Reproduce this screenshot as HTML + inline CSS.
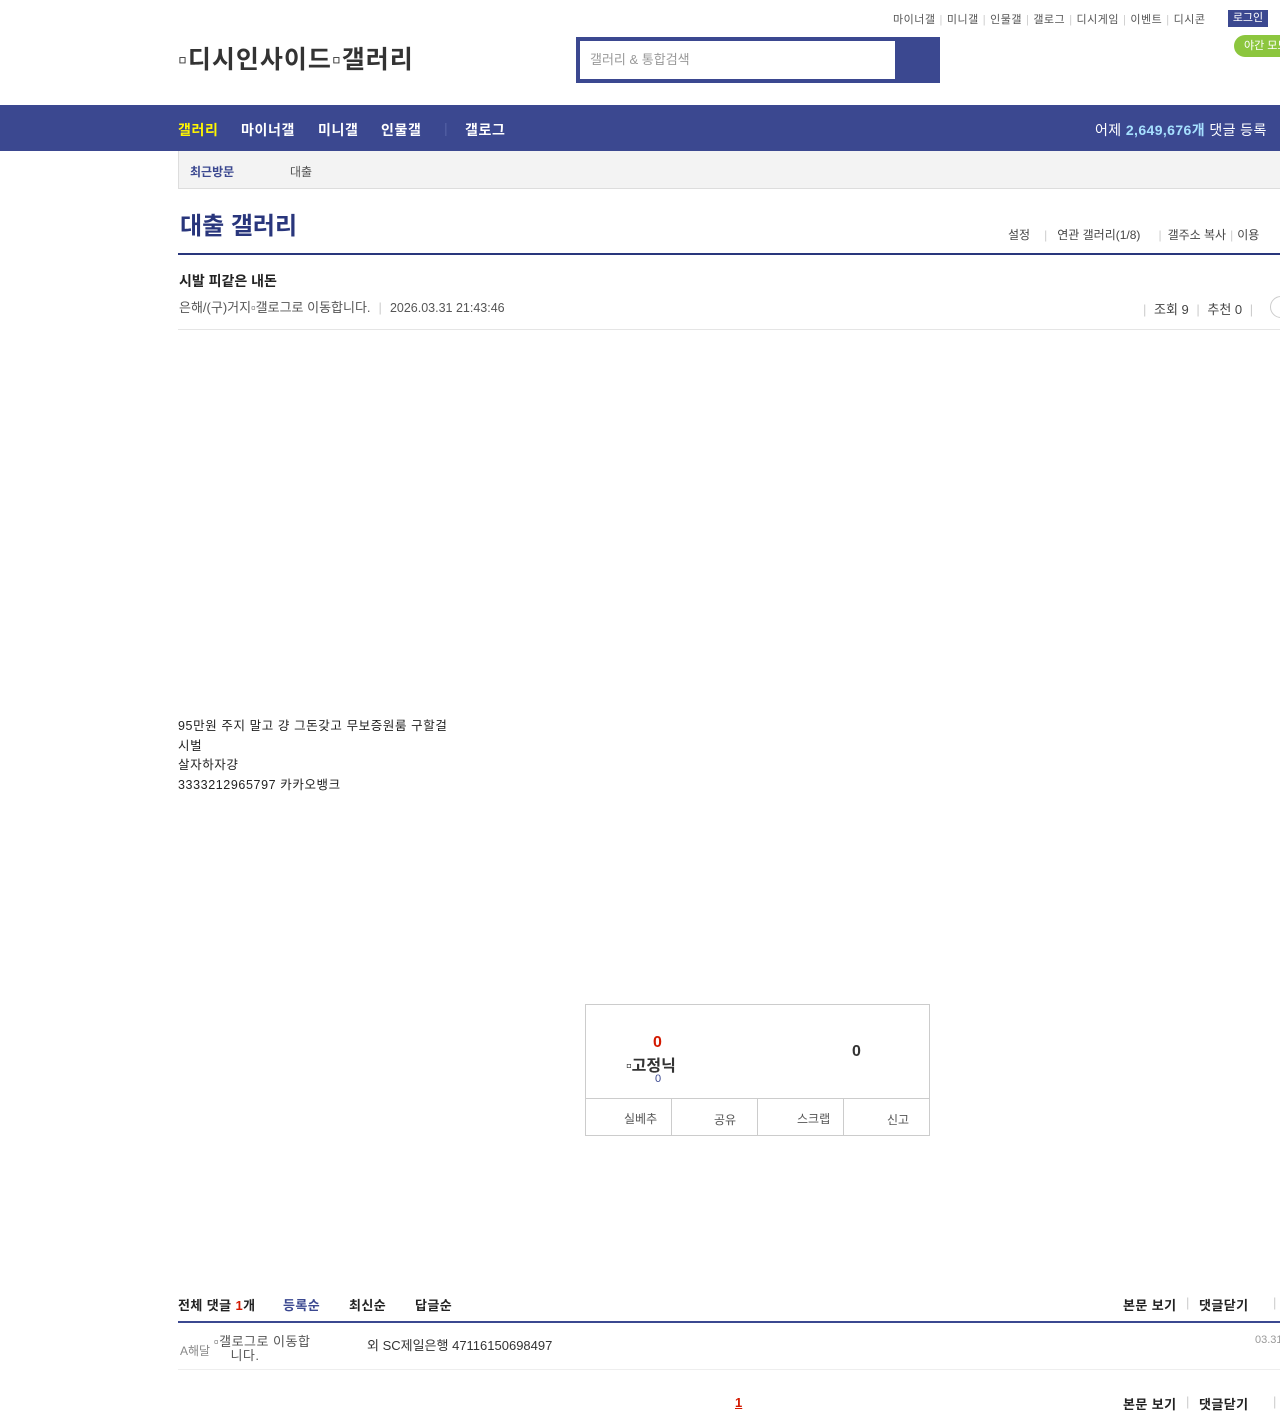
<!DOCTYPE html>
<html><head><meta charset="utf-8"><style>
*{margin:0;padding:0;box-sizing:border-box}
body{width:1280px;height:1428px;overflow:hidden;background:#fff;font-family:"Liberation Sans","Noto Sans CJK KR",sans-serif;color:#333;position:relative}
.a{position:absolute;white-space:nowrap}
.s{color:#ccc;margin:0 4px}
.n{position:absolute;top:120px;font-size:14px;font-weight:bold;color:#fff;letter-spacing:0.6px}
.c{position:absolute;top:1295px;font-size:13px;font-weight:bold;color:#222;letter-spacing:0.4px}
</style></head><body>
<div class="a" style="top:11px;left:893px;font-size:11px;color:#555;letter-spacing:0.5px">마이너갤<span class="s">|</span>미니갤<span class="s">|</span>인물갤<span class="s">|</span>갤로그<span class="s">|</span>디시게임<span class="s">|</span>이벤트<span class="s">|</span>디시콘</div>
<div class="a" style="top:10px;left:1228px;width:40px;height:17px;background:#3b4890;color:#fff;font-size:11px;text-align:center;line-height:17px">로그인</div>
<div class="a" style="top:35px;left:1234px;width:60px;height:22px;background:#8cc63e;color:#fff;font-size:11px;line-height:22px;padding-left:10px;border-radius:11px">야간 모드</div>
<div class="a" style="top:40px;left:178px;font-size:25px;font-weight:bold;color:#333;letter-spacing:1px">▫디시인사이드▫갤러리</div>
<div class="a" style="top:37px;left:576px;width:364px;height:46px;background:#3b4890"></div>
<div class="a" style="top:41px;left:580px;width:315px;height:38px;background:#fff;font-size:13px;color:#999;line-height:38px;padding-left:10px">갤러리 &amp; 통합검색</div>
<div class="a" style="top:105px;left:0;width:1280px;height:46px;background:#3b4890"></div>
<div class="n" style="left:178px;color:#fff600">갤러리</div>
<div class="n" style="left:241px">마이너갤</div>
<div class="n" style="left:318px">미니갤</div>
<div class="n" style="left:381px">인물갤</div>
<div class="n" style="left:444px;color:#5562a5;font-weight:normal">|</div>
<div class="n" style="left:465px">갤로그</div>
<div class="a" style="top:120px;left:1095px;font-size:14px;color:#fff;letter-spacing:0.4px">어제 <b style="color:#a6e0ff">2,649,676개</b> 댓글 등록</div>
<div class="a" style="top:151px;left:178px;width:1102px;height:38px;background:#f3f3f3;border:1px solid #ddd;border-top:0;border-right:0"></div>
<div class="a" style="top:163px;left:190px;font-size:12px;font-weight:bold;color:#3b4890">최근방문</div>
<div class="a" style="top:163px;left:290px;font-size:12px;color:#555">대출</div>
<div class="a" style="top:206px;left:180px;font-size:24px;font-weight:bold;color:#29367c">대출 갤러리</div>
<div class="a" style="top:226px;left:1008px;font-size:12px;color:#444">설정<span class="s" style="margin:0 10px 0 14px">|</span>연관 갤러리(1/8)<span class="s" style="margin:0 6px 0 18px">|</span>갤주소 복사<span class="s">|</span>이용</div>
<div class="a" style="top:253px;left:178px;width:1102px;height:2px;background:#29367c"></div>
<div class="a" style="top:271px;left:179px;font-size:14px;font-weight:bold;color:#222">시발 피같은 내돈</div>
<div class="a" style="top:297px;left:179px;font-size:13px;color:#555">은해/(구)거지▫갤로그로 이동합니다.<span class="s" style="margin:0 8px">|</span><span style="font-size:12.5px">2026.03.31 21:43:46</span></div>
<div class="a" style="top:299px;left:1139px;font-size:13px;color:#444"><span class="s">|</span> 조회 9 <span class="s">|</span> 추천 0 <span class="s">|</span></div>
<div class="a" style="top:296px;left:1270px;width:22px;height:22px;border:1px solid #ccc;border-radius:11px"></div>
<div class="a" style="top:329px;left:178px;width:1102px;height:1px;background:#e5e5e5"></div>
<div class="a" style="top:717px;left:178px;font-size:12.5px;color:#222;line-height:19.5px;letter-spacing:0.6px">95만원 주지 말고 걍 그돈갖고 무보증원룸 구할걸<br>시벌<br>살자하자걍<br>3333212965797 카카오뱅크</div>
<div class="a" style="top:1004px;left:585px;width:345px;height:132px;border:1px solid #ccc"></div>
<div class="a" style="top:1034px;left:653px;font-size:16px;font-weight:bold;color:#d31900">0</div>
<div class="a" style="top:1052px;left:626px;font-size:16px;font-weight:bold;color:#333">▫고정닉</div>
<div class="a" style="top:1073px;left:655px;font-size:11px;color:#3b4890">0</div>
<div class="a" style="top:1043px;left:852px;font-size:16px;font-weight:bold;color:#333">0</div>
<div class="a" style="top:1098px;left:586px;width:343px;height:37px;border-top:1px solid #ccc"></div>
<div class="a" style="top:1099px;left:671px;width:1px;height:36px;background:#ccc"></div>
<div class="a" style="top:1099px;left:757px;width:1px;height:36px;background:#ccc"></div>
<div class="a" style="top:1099px;left:843px;width:1px;height:36px;background:#ccc"></div>
<div class="a" style="top:1110px;left:624px;font-size:12px;color:#555">실베추</div>
<div class="a" style="top:1111px;left:714px;font-size:12px;color:#555">공유</div>
<div class="a" style="top:1110px;left:797px;font-size:12px;color:#555">스크랩</div>
<div class="a" style="top:1111px;left:887px;font-size:12px;color:#555">신고</div>
<div class="c" style="left:178px">전체 댓글 <span style="color:#d31900">1</span>개</div>
<div class="c" style="left:283px;color:#3b4890">등록순</div>
<div class="c" style="left:349px">최신순</div>
<div class="c" style="left:415px">답글순</div>
<div class="c" style="left:1123px">본문 보기</div>
<div class="c" style="left:1186px;color:#ccc;font-weight:normal">|</div>
<div class="c" style="left:1199px">댓글닫기</div>
<div class="c" style="left:1273px;color:#ccc;font-weight:normal">|</div>
<div class="a" style="top:1321px;left:178px;width:1102px;height:2px;background:#3b4890"></div>
<div class="a" style="top:1342px;left:180px;font-size:12px;color:#888">A해달</div>
<div class="a" style="top:1335px;left:214px;font-size:13px;color:#555;line-height:14px;white-space:normal;width:115px;letter-spacing:0.5px">▫갤로그로 이동합<br>&nbsp;&nbsp;&nbsp;&nbsp;니다.</div>
<div class="a" style="top:1335px;left:367px;font-size:13px;color:#333">외 SC제일은행 47116150698497</div>
<div class="a" style="top:1334px;left:1255px;font-size:11px;color:#999">03.31</div>
<div class="a" style="top:1369px;left:178px;width:1102px;height:1px;background:#eee"></div>
<div class="a" style="top:1395px;left:735px;font-size:13px;font-weight:bold;color:#d31900;text-decoration:underline">1</div>
<div class="c" style="top:1394px;left:1123px">본문 보기</div>
<div class="c" style="top:1394px;left:1186px;color:#ccc;font-weight:normal">|</div>
<div class="c" style="top:1394px;left:1199px">댓글닫기</div>
<div class="c" style="top:1394px;left:1273px;color:#ccc;font-weight:normal">|</div>
</body></html>
